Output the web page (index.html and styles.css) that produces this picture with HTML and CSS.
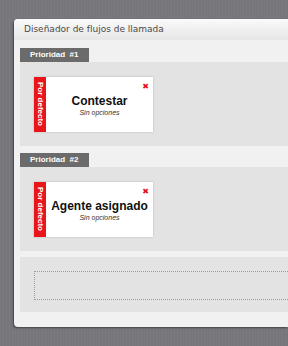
FILE: index.html
```html
<!DOCTYPE html>
<html lang="es">

<head>
    <meta charset="UTF-8">
    <meta name="viewport" content="width=device-width, initial-scale=1.0">
    <title>Diseñador de flujos de llamada</title>
    <link rel="stylesheet" href="styles.css">
</head>

<body>
    <div class="panel">
        <header class="panel-head">Diseñador de flujos de llamada</header>

        <section class="priority">
            <div class="tab">Prioridad&nbsp;&nbsp;#1</div>
            <div class="zone">
                <div class="card">
                    <span class="flag">Por defecto</span>
                    <div class="card-body">
                        <span class="remove">&#10006;</span>
                        <h3>Contestar</h3>
                        <em>Sin opciones</em>
                    </div>
                </div>
            </div>
        </section>

        <section class="priority">
            <div class="tab">Prioridad&nbsp;&nbsp;#2</div>
            <div class="zone">
                <div class="card">
                    <span class="flag">Por defecto</span>
                    <div class="card-body">
                        <span class="remove">&#10006;</span>
                        <h3>Agente asignado</h3>
                        <em>Sin opciones</em>
                    </div>
                </div>
            </div>
        </section>

        <section class="priority new">
            <div class="zone">
                <div class="drop"></div>
            </div>
        </section>
    </div>
</body>

</html>
```

FILE: styles.css
```css
html,
body {
    height: 100%;
}

body {
    margin: 0;
    overflow: hidden;
    font-family: "Liberation Sans", Arial, sans-serif;
    background: #77777b repeating-linear-gradient(90deg, rgba(255, 255, 255, .03) 0 1px, transparent 1px 3px);
    padding: 19px 0 0 14px;
    box-sizing: border-box;
}

.panel {
    height: 308px;
    background: #f1f1f1;
    border-radius: 4px 0 0 4px;
    box-shadow: -1px 1px 2px rgba(0, 0, 0, .45);
    overflow: hidden;
}

.panel-head {
    height: 21px;
    line-height: 21px;
    padding-left: 10px;
    font-family: "DejaVu Sans", Verdana, sans-serif;
    font-size: 9px;
    color: #4a4a4a;
    background: linear-gradient(#fafafa, #e6e6e6);
}

.priority {
    margin: 7px 0 0 6px;

    &:first-of-type {
        margin-top: 8px;
    }

    &.new {
        margin-top: 6px;
    }
}

.tab {
    width: 59px;
    height: 14px;
    line-height: 14px;
    padding-left: 10px;
    background: #6b6b6b;
    color: #fff;
    font-size: 8px;
    font-weight: bold;
}

.zone {
    background: #e3e3e3;
    padding: 15px 0 14px 14px;
}

.card {
    width: 119px;
    height: 55px;
    display: flex;
    background: #fff;
    box-shadow: 0 0 2px rgba(0, 0, 0, .2);
}

.flag {
    width: 12px;
    background: #e8151b;
    color: #fff;
    font-size: 8px;
    font-weight: bold;
    writing-mode: vertical-rl;
    text-align: center;
    line-height: 12px;
    white-space: nowrap;
}

.card-body {
    flex-grow: 1;
    position: relative;
    display: flex;
    flex-direction: column;
    align-items: center;
    justify-content: center;
    padding-top: 1px;

    h3 {
        margin: 0;
        font-size: 12px;
        color: #111;
    }

    em {
        font-size: 7px;
        color: #333;
        margin-top: 1px;
    }
}

.remove {
    position: absolute;
    top: 5px;
    right: 4px;
    color: #e3141b;
    font-size: 8px;
    font-weight: bold;
    font-family: "DejaVu Sans", sans-serif;
}

.new .zone {
    padding: 14px 0 12px 14px;
}

.drop {
    height: 27px;
    border: 1px dotted #9c9c9c;
    border-right: 0;
}
```
